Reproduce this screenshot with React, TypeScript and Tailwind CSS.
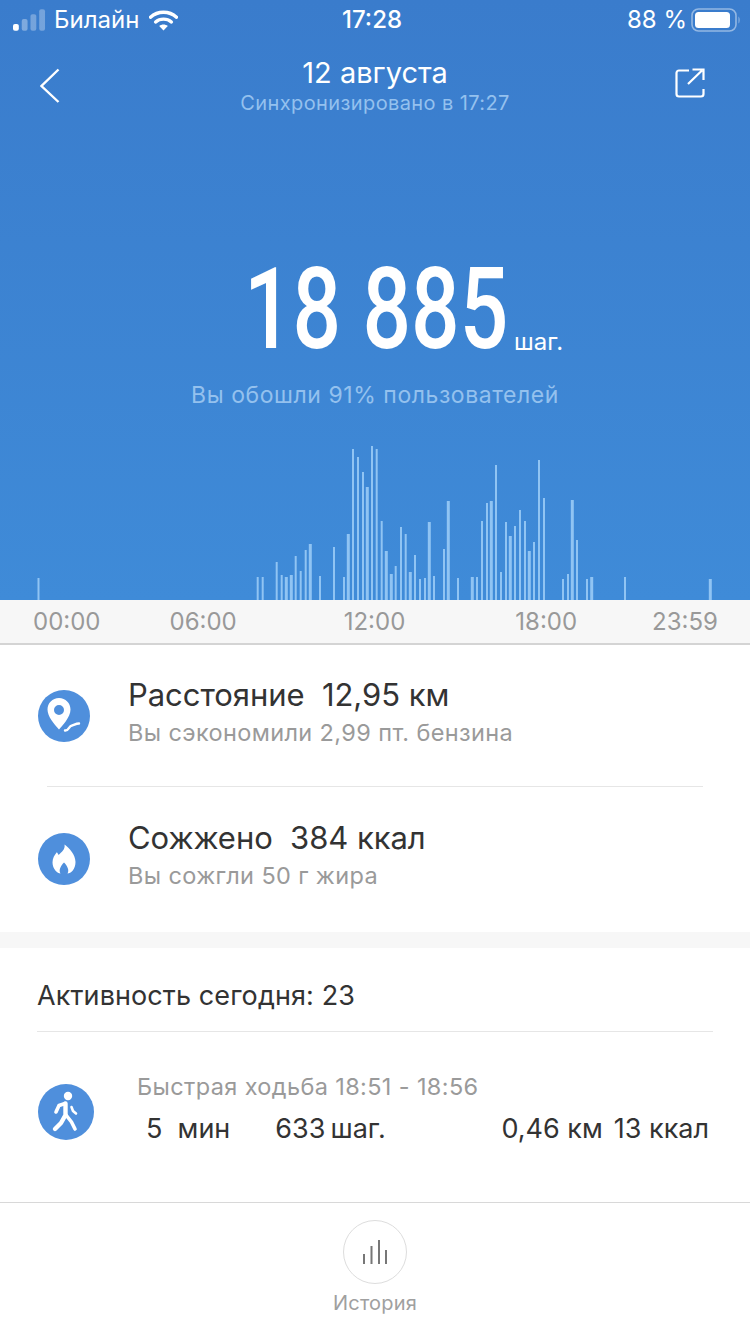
const BARS: [number, number, number][] = [
  [38.5, 22, 2], [257.7, 23, 2], [262.7, 23, 2], [276.7, 38, 2], [281.7, 25, 2], [286.3, 23, 3], [291.3, 25, 3],
  [295.7, 44, 2], [300.7, 29, 2], [305.7, 50, 2], [310.3, 56, 3], [320, 24, 2], [334, 53, 2], [344, 23, 2],
  [348.3, 66, 3], [353, 151, 2], [358, 143, 2], [363, 128, 2], [367.3, 113, 3], [372, 154, 2], [376.7, 151, 2],
  [381.7, 79, 2], [386.3, 49, 3], [391.3, 26, 3], [395.7, 34, 2], [401, 73, 2], [405.7, 66, 2], [410.3, 28, 3],
  [415, 45, 2], [420, 21, 2], [425, 22, 2], [429.3, 78, 3], [434, 24, 2], [444, 51, 2], [448.3, 99, 3], [458, 22, 2],
  [472.3, 23, 3], [477, 23, 2], [482, 79, 2], [487, 97, 2], [491.3, 99, 3], [496, 135, 2], [501, 28, 2], [506, 78, 2],
  [510.3, 64, 3], [515, 74, 2], [520, 90, 2], [525, 79, 2], [529.3, 49, 3], [534, 58, 2], [539, 140, 2], [544, 102, 2],
  [563, 21, 2], [568, 26, 2], [572.3, 100, 3], [577, 60, 2], [587, 21, 2], [591.7, 23, 3], [625, 23, 2], [710.3, 21, 3],
];

function StatusBar() {
  return (
    <div className="h-[40px] flex items-center text-white text-[24px] relative">
      <div className="flex items-center ml-[13px] w-[33px] h-[22px]">
        <svg width="34" height="22" viewBox="0 0 34 22">
          <rect x="0" y="15" width="6" height="7" rx="2" fill="#ffffff" />
          <rect x="9" y="10" width="6" height="12" rx="2" fill="#ffffff" fillOpacity="0.35" />
          <rect x="18" y="5" width="6" height="17" rx="2" fill="#ffffff" fillOpacity="0.3" />
          <rect x="27" y="0" width="6" height="22" rx="2" fill="#ffffff" fillOpacity="0.3" />
        </svg>
      </div>
      <span className="ml-[8px] leading-none">Билайн</span>
      <svg className="ml-[10px]" width="29" height="21" viewBox="0 0 29 21">
        <path d="M1.5 7.2C8.8 0.6 20.2 0.6 27.5 7.2" fill="none" stroke="#ffffff" strokeWidth="3.4" strokeLinecap="round" />
        <path d="M6.6 12C11 8.2 18 8.2 22.4 12" fill="none" stroke="#ffffff" strokeWidth="3.4" strokeLinecap="round" />
        <path d="M10.2 16L14.5 20.6L18.8 16C16.4 14 12.6 14 10.2 16Z" fill="#ffffff" />
      </svg>
      <span className="absolute left-[342px] font-medium leading-none">17:28</span>
      <span className="absolute left-[627px] leading-none">88 %</span>
      <svg className="absolute left-[691px] top-[8px]" width="50" height="24" viewBox="0 0 50 24">
        <rect x="1" y="1" width="44" height="22" rx="6.5" fill="none" stroke="#ffffff" strokeOpacity="0.45" strokeWidth="1.6" />
        <rect x="4" y="4" width="35" height="16" rx="3.5" fill="#ffffff" />
        <path d="M47.5 8.5C49 9.5 49 14.5 47.5 15.5Z" fill="#ffffff" fillOpacity="0.45" />
      </svg>
    </div>
  );
}

function NavBar() {
  return (
    <div className="h-[74px] flex items-start justify-between relative">
      <svg className="ml-[40px] mt-[28px]" width="20" height="36" viewBox="0 0 20 36">
        <path d="M18.5 1.5L1.5 18L18.5 34" fill="none" stroke="#ffffff" strokeWidth="2.4" />
      </svg>
      <div className="absolute inset-x-0 top-[14px] flex flex-col items-center">
        <span className="text-[29px] leading-[38px] text-white">12 августа</span>
        <span className="text-[20px] leading-[22px] tracking-[0.4px] text-[#94c1ee]">Синхронизировано в 17:27</span>
      </div>
      <svg className="mr-[45px] mt-[28px]" width="30" height="30" viewBox="0 0 30 30">
        <path d="M14 2.5H4C2.6 2.5 1.5 3.6 1.5 5V26C1.5 27.4 2.6 28.5 4 28.5H26C27.4 28.5 28.5 27.4 28.5 26V21" fill="none" stroke="#ffffff" strokeWidth="2.2" />
        <path d="M13 16L27 2.5M17.5 1.5H28.5V12" fill="none" stroke="#ffffff" strokeWidth="2.2" />
      </svg>
    </div>
  );
}

function StepsChart() {
  return (
    <svg className="block mt-auto" width="750" height="160" viewBox="0 0 750 160">
      {BARS.map(([x, h, w]) => (
        <rect key={x} x={x - w / 2} y={160 - h} width={w} height={h} fill="#90c4f3" />
      ))}
    </svg>
  );
}

function CircleIcon({ size, children }: { size: string; children: React.ReactNode }) {
  return <div className={`${size} rounded-full bg-[#4f8fdc] flex items-center justify-center shrink-0`}>{children}</div>;
}

function StatRow({ icon, title, value, note, className }: { icon: React.ReactNode; title: string; value: string; note: string; className: string }) {
  return (
    <div className={`flex items-center pl-[38px] ${className}`}>
      <CircleIcon size="w-[52px] h-[52px]">{icon}</CircleIcon>
      <div className="ml-[38px] mt-[-8px]">
        <div className="text-[31px] leading-[38px] tracking-[-0.05px] text-[#333333] whitespace-pre">{title}  {value}</div>
        <div className="text-[23.5px] leading-[30px] mt-[4px] tracking-[0.38px] text-[#9a9a9a]">{note}</div>
      </div>
    </div>
  );
}

export default function App() {
  return (
    <div className="w-[750px] h-[1334px] bg-white flex flex-col overflow-hidden font-['Inter','Liberation_Sans',sans-serif]">
      <div className="h-[600px] flex flex-col bg-gradient-to-b from-[#3a7ccc] to-[#3f8bd8]">
        <StatusBar />
        <NavBar />
        <div className="mt-[146px] h-[100px] flex items-end pl-[244px]">
          <span className="block w-[262px] h-[100px] leading-[100px] origin-left scale-x-[0.757] whitespace-nowrap text-[113px] text-white font-['Roboto',sans-serif] font-medium">18 885</span>
          <span className="ml-[8px] text-[24px] leading-[30px] mb-[3px] text-white">шаг.</span>
        </div>
        <div className="mt-[20px] text-center text-[23px] leading-[30px] tracking-[0.55px] text-[#94c1ee]">Вы обошли 91% пользователей</div>
        <StepsChart />
      </div>

      <div className="h-[45px] shrink-0 flex items-center bg-[#f7f7f7] border-b-2 border-[#d4d4d4] text-[24px] text-[#999999] leading-none">
        <span className="ml-[33px]">00:00</span>
        <span className="ml-[69px]">06:00</span>
        <span className="ml-[107px]">12:00</span>
        <span className="ml-[110px]">18:00</span>
        <span className="ml-[75px]">23:59</span>
      </div>

      <StatRow
        className="h-[141px]"
        title="Расстояние"
        value="12,95 км"
        note="Вы сэкономили 2,99 пт. бензина"
        icon={
          <svg width="36" height="38" viewBox="0 0 36 38">
            <path fillRule="evenodd" d="M13 1C6.4 1 1.5 6.2 1.5 12.6C1.5 19.5 8 27 13 32.5C16 29.4 24.5 20.2 24.5 12.6C24.5 6.2 19.6 1 13 1ZM13 8A5 5 0 1 1 13 18A5 5 0 1 1 13 8Z" fill="#ffffff" />
            <path d="M19 33.5C23 34 22.5 29 26 28.5C28.5 28 29.5 26.5 33 26.5" fill="none" stroke="#ffffff" strokeWidth="2.4" strokeLinecap="round" />
          </svg>
        }
      />
      <div className="h-px shrink-0 mx-[47px] bg-[#e6e6e6]" />
      <StatRow
        className="h-[145px] pb-[2px]"
        title="Сожжено"
        value="384 ккал"
        note="Вы сожгли 50 г жира"
        icon={
          <svg width="24" height="30" viewBox="0 0 24 30">
            <path fillRule="evenodd" d="M12.5 0.5C13.5 5.5 9.5 8 6.5 11C6 9.5 5.5 9 4.8 8.2C2.5 11 0.5 14 0.5 18.5C0.5 25 5.5 29.5 8.5 29.5C6.5 26.5 8.5 22 12 18.5C15.5 22 17.5 26.5 15.5 29.5C19 29.5 23.5 25 23.5 18C23.5 11 17.5 4 12.5 0.5Z" fill="#ffffff" />
          </svg>
        }
      />
      <div className="h-[16px] shrink-0 bg-[#f7f7f7]" />

      <div className="mx-[37px] h-[84px] shrink-0 pt-[14px] flex items-center border-b border-[#e6e6e6] text-[27px] tracking-[0.1px] text-[#333333]">Активность сегодня: 23</div>

      <div className="h-[170px] shrink-0 flex items-start pl-[38px]">
        <div className="mt-[52px]">
          <CircleIcon size="w-[56px] h-[56px]">
            <svg width="32" height="42" viewBox="0 0 32 42">
              <circle cx="18" cy="5" r="4.2" fill="#ffffff" />
              <path d="M15 12.5L9 14.5L6 21" fill="none" stroke="#ffffff" strokeWidth="3.6" strokeLinecap="round" strokeLinejoin="round" />
              <path d="M15.5 12.5L15.5 24L11 32L5 38" fill="none" stroke="#ffffff" strokeWidth="4.4" strokeLinecap="round" strokeLinejoin="round" />
              <path d="M16 24L21.5 31L25 38" fill="none" stroke="#ffffff" strokeWidth="3.6" strokeLinecap="round" strokeLinejoin="round" />
              <path d="M21.5 16L23 20L26 22.5" fill="none" stroke="#ffffff" strokeWidth="2.6" strokeLinecap="round" strokeLinejoin="round" />
            </svg>
          </CircleIcon>
        </div>
        <div className="ml-[43px] mt-[40px] w-[580px]">
          <div className="text-[23.5px] leading-[30px] tracking-[0.37px] text-[#9a9a9a]">Быстрая ходьба 18:51 - 18:56</div>
          <div className="flex items-center mt-[12px] text-[27px] leading-[30px] text-[#333333]">
            <span className="ml-[9px] whitespace-pre">5  мин</span>
            <span className="ml-[45px]">633</span>
            <span className="ml-[5px]">шаг.</span>
            <span className="ml-auto">0,46 км</span>
            <span className="ml-[11px] mr-[8px]">13 ккал</span>
          </div>
        </div>
      </div>

      <div className="flex-1 border-t border-[#d8d8d8] flex flex-col items-center">
        <div className="mt-[17px] w-[64px] h-[64px] rounded-full border border-[#dddddd] flex items-center justify-center">
          <svg width="26" height="24" viewBox="0 0 26 24">
            <path d="M2 14V24M9.5 6V24M17 0V24M24 10V24" fill="none" stroke="#777777" strokeWidth="2" />
          </svg>
        </div>
        <span className="mt-[7px] text-[20px] leading-[24px] tracking-[0.2px] text-[#a0a0a0]">История</span>
      </div>
    </div>
  );
}
